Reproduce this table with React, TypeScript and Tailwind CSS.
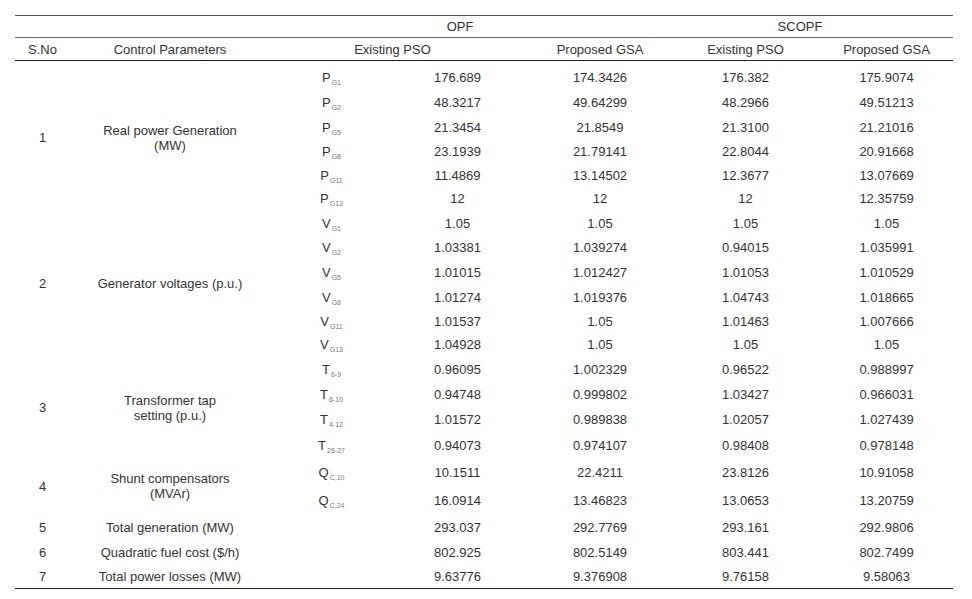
import React from 'react';

type Row = { sym: string; sub: string; v: [string, string, string, string]; h: string };
type Group = { sno: string; label: string[]; rows: Row[] };

const groups: Group[] = [
  {
    sno: '1',
    label: ['Real power Generation', '(MW)'],
    rows: [
      { sym: 'P', sub: 'G1', v: ['176.689', '174.3426', '176.382', '175.9074'], h: 'h-[25px]' },
      { sym: 'P', sub: 'G2', v: ['48.3217', '49.64299', '48.2966', '49.51213'], h: 'h-[25px]' },
      { sym: 'P', sub: 'G5', v: ['21.3454', '21.8549', '21.3100', '21.21016'], h: 'h-[25px]' },
      { sym: 'P', sub: 'G8', v: ['23.1939', '21.79141', '22.8044', '20.91668'], h: 'h-[24px]' },
      { sym: 'P', sub: 'G11', v: ['11.4869', '13.14502', '12.3677', '13.07669'], h: 'h-[23px]' },
      { sym: 'P', sub: 'G13', v: ['12', '12', '12', '12.35759'], h: 'h-[24px]' },
    ],
  },
  {
    sno: '2',
    label: ['Generator voltages (p.u.)'],
    rows: [
      { sym: 'V', sub: 'G1', v: ['1.05', '1.05', '1.05', '1.05'], h: 'h-[25px]' },
      { sym: 'V', sub: 'G2', v: ['1.03381', '1.039274', '0.94015', '1.035991'], h: 'h-[24px]' },
      { sym: 'V', sub: 'G5', v: ['1.01015', '1.012427', '1.01053', '1.010529'], h: 'h-[25px]' },
      { sym: 'V', sub: 'G8', v: ['1.01274', '1.019376', '1.04743', '1.018665'], h: 'h-[25px]' },
      { sym: 'V', sub: 'G11', v: ['1.01537', '1.05', '1.01463', '1.007666'], h: 'h-[23px]' },
      { sym: 'V', sub: 'G13', v: ['1.04928', '1.05', '1.05', '1.05'], h: 'h-[24px]' },
    ],
  },
  {
    sno: '3',
    label: ['Transformer tap', 'setting (p.u.)'],
    rows: [
      { sym: 'T', sub: '6-9', v: ['0.96095', '1.002329', '0.96522', '0.988997'], h: 'h-[26px]' },
      { sym: 'T', sub: '6-10', v: ['0.94748', '0.999802', '1.03427', '0.966031'], h: 'h-[24px]' },
      { sym: 'T', sub: '4-12', v: ['1.01572', '0.989838', '1.02057', '1.027439'], h: 'h-[25px]' },
      { sym: 'T', sub: '28-27', v: ['0.94073', '0.974107', '0.98408', '0.978148'], h: 'h-[27px]' },
    ],
  },
  {
    sno: '4',
    label: ['Shunt compensators', '(MVAr)'],
    rows: [
      { sym: 'Q', sub: 'C,10', v: ['10.1511', '22.4211', '23.8126', '10.91058'], h: 'h-[28px]' },
      { sym: 'Q', sub: 'C,24', v: ['16.0914', '13.46823', '13.0653', '13.20759'], h: 'h-[27px]' },
    ],
  },
];

const totals = [
  { sno: '5', label: 'Total generation (MW)', v: ['293.037', '292.7769', '293.161', '292.9806'], h: 'h-[27px]' },
  { sno: '6', label: 'Quadratic fuel cost ($/h)', v: ['802.925', '802.5149', '803.441', '802.7499'], h: 'h-[24px]' },
  { sno: '7', label: 'Total power losses (MW)', v: ['9.63776', '9.376908', '9.76158', '9.58063'], h: 'h-[24px]' },
];

function Values({ v }: { v: string[] }) {
  return (
    <>
      <td className="text-center p-0">{v[0]}</td>
      <td className="text-center p-0">{v[1]}</td>
      <td className="text-center p-0 pr-[14px]">{v[2]}</td>
      <td className="text-center p-0">{v[3]}</td>
    </>
  );
}

export default function App() {
  return (
    <div className="w-[972px] h-[599px] bg-white pt-[15px] pl-[15px] font-['Liberation_Sans',Arial,sans-serif] text-[13px] text-[#333]">
      <table className="w-[938px] table-fixed border-collapse leading-none">
        <colgroup>
          <col className="w-[55px]" />
          <col className="w-[200px]" />
          <col className="w-[130px]" />
          <col className="w-[115px]" />
          <col className="w-[170px]" />
          <col className="w-[135px]" />
          <col className="w-[133px]" />
        </colgroup>
        <thead>
          <tr className="h-[22px] border-t border-[#555] border-b border-b-[#666]">
            <th className="p-0" />
            <th className="p-0" />
            <th colSpan={3} className="p-0 pr-[35px] font-normal text-center">OPF</th>
            <th colSpan={2} className="p-0 pr-[38px] font-normal text-center">SCOPF</th>
          </tr>
          <tr className="h-[23px] border-b border-[#222]">
            <th className="p-0 font-normal text-center">S.No</th>
            <th className="p-0 font-normal text-center">Control Parameters</th>
            <th colSpan={2} className="p-0 font-normal text-center">Existing PSO</th>
            <th className="p-0 font-normal text-center">Proposed GSA</th>
            <th className="p-0 pr-[14px] font-normal text-center">Existing PSO</th>
            <th className="p-0 font-normal text-center">Proposed GSA</th>
          </tr>
        </thead>
        <tbody>
          <tr className="h-[4px]">
            <td colSpan={7} className="p-0" />
          </tr>
          {groups.map((g) =>
            g.rows.map((r, i) => (
              <tr key={g.sno + r.sub} className={r.h}>
                {i === 0 && (
                  <>
                    <td rowSpan={g.rows.length} className="p-0 text-center">{g.sno}</td>
                    <td rowSpan={g.rows.length} className="p-0 text-center leading-[15px]">
                      {g.label.map((l) => (
                        <div key={l}>{l}</div>
                      ))}
                    </td>
                  </>
                )}
                <td className="p-0 pr-[7px] text-center">
                  <span>
                    {r.sym}
                    <span className="relative top-[3px] ml-[1px] text-[7px] text-[#777]">{r.sub}</span>
                  </span>
                </td>
                <Values v={r.v} />
              </tr>
            ))
          )}
          {totals.map((t, i) => (
            <tr key={t.sno} className={`${t.h} ${i === totals.length - 1 ? 'border-b border-[#222]' : ''}`}>
              <td className="p-0 text-center">{t.sno}</td>
              <td className="p-0 text-center">{t.label}</td>
              <td className="p-0" />
              <Values v={t.v} />
            </tr>
          ))}
        </tbody>
      </table>
    </div>
  );
}
